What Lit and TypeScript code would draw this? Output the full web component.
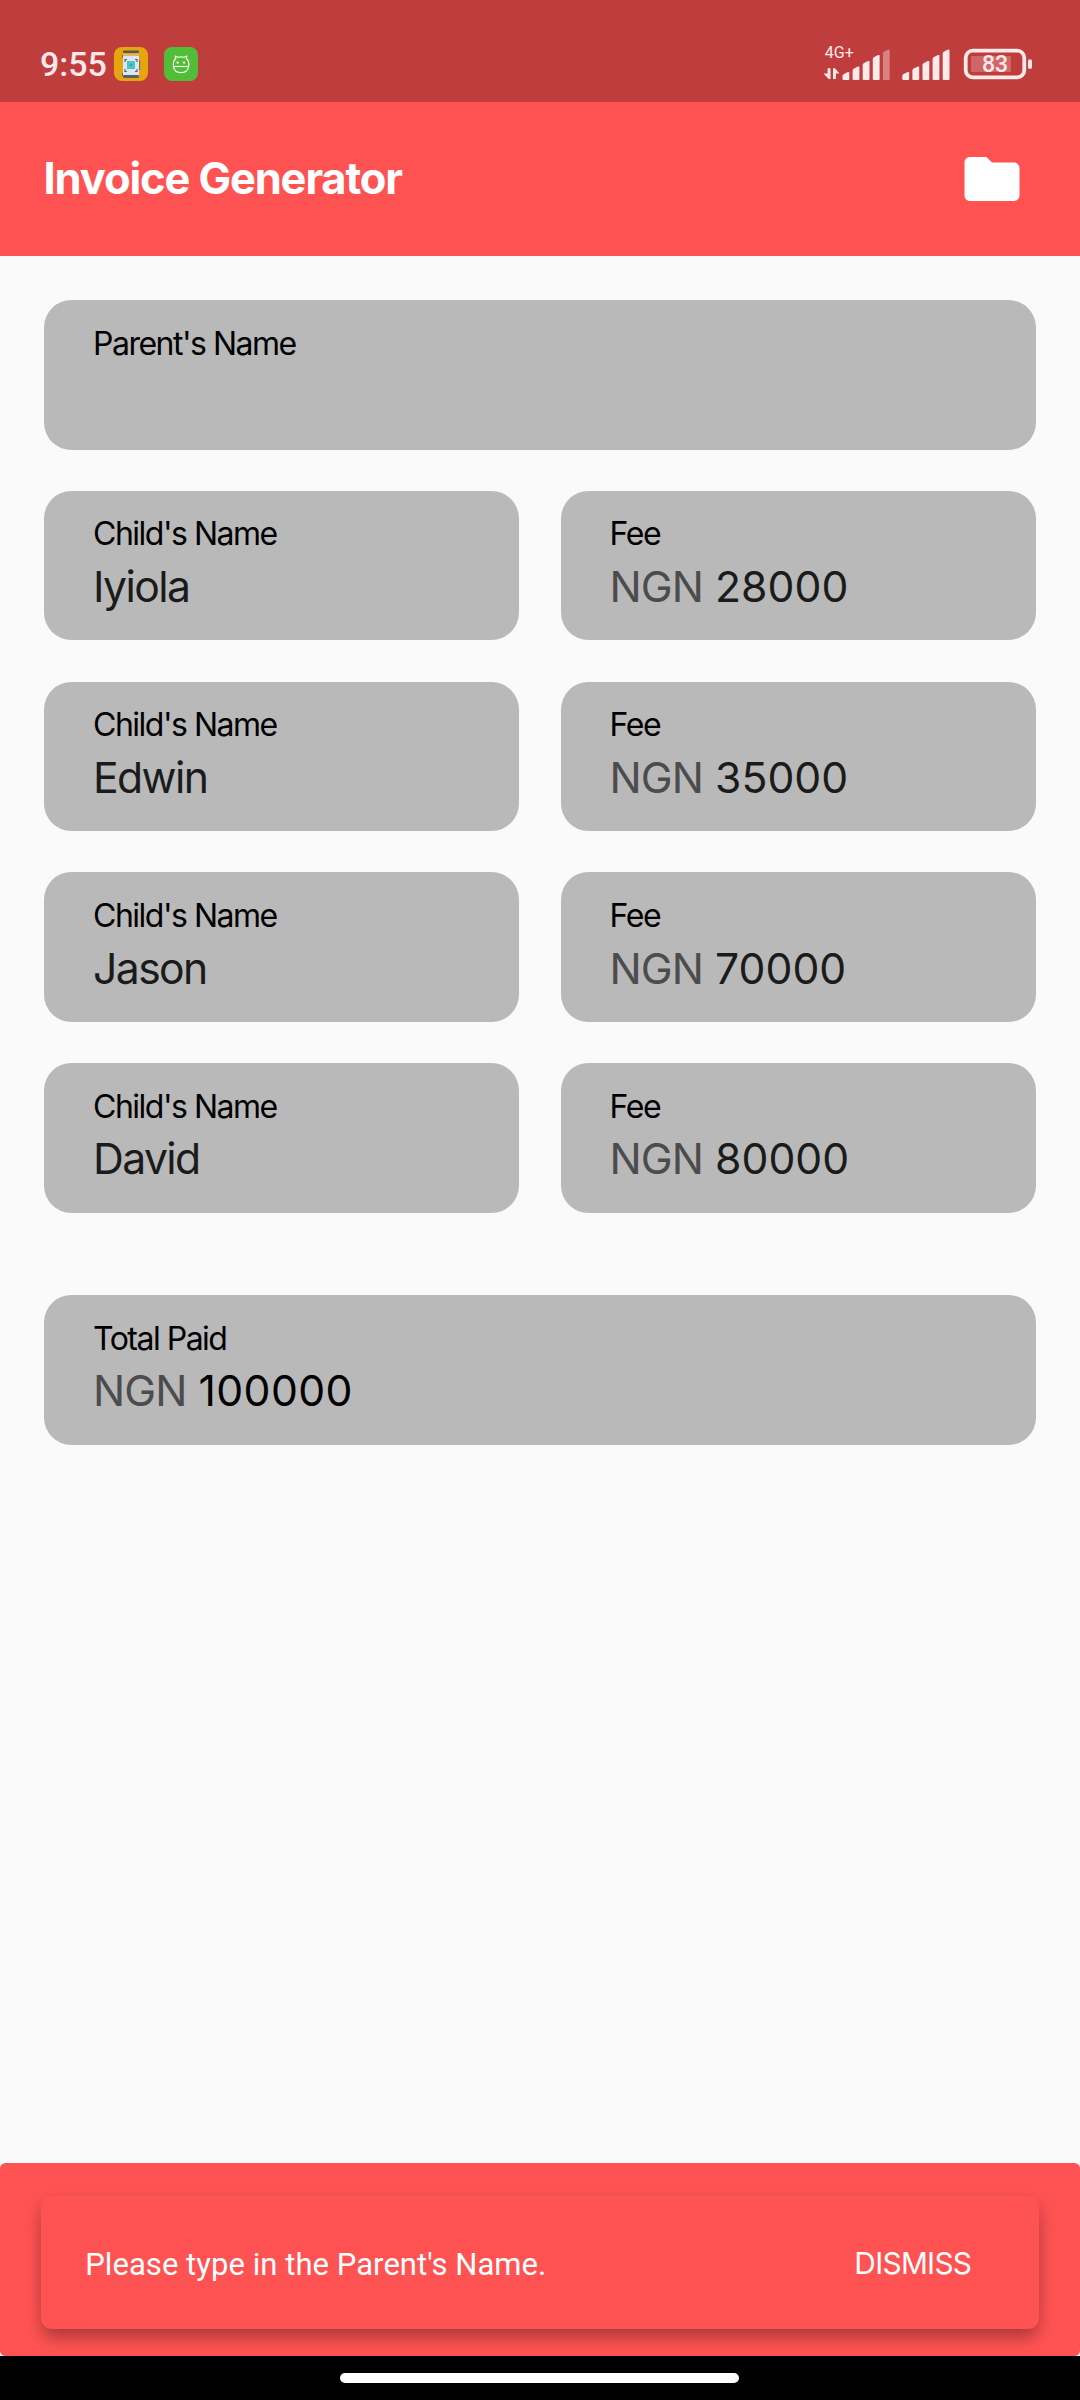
import { LitElement, html, css, svg, nothing } from "lit";
import { customElement, property } from "lit/decorators.js";

interface Child {
  name: string;
  fee: string;
}

const CHILDREN: Child[] = [
  { name: "Iyiola", fee: "28000" },
  { name: "Edwin", fee: "35000" },
  { name: "Jason", fee: "70000" },
  { name: "David", fee: "80000" },
];

/** Signal bars: left edge and height of each, from weakest to strongest. */
const BAR_HEIGHTS = [8, 13.5, 19, 25, 30.5];
const bars = (x: number, lit: number) =>
  BAR_HEIGHTS.map((h, i) => {
    const l = x + i * 10.1;
    const r = l + 6.8;
    return svg`<path class=${i < lit ? "bar" : "bar dim"}
      d="M${l + 1} 40H${r - 1}Q${r} 40 ${r} 39V${40.6 - h}Q${r} ${40 - h} ${r - 1} ${40 - h}L${r - 2} ${40.2 - h}L${l + 1} ${42.2 - h}Q${l} ${43 - h} ${l} ${44 - h}V39Q${l} 40 ${l + 1} 40Z"/>`;
  });

@customElement("status-bar")
export class StatusBar extends LitElement {
  static styles = css`
    :host {
      display: flex;
      align-items: center;
      box-sizing: border-box;
      height: 102px;
      padding: 26px 44px 0 40px;
      background: #c03d3d;
      font-family: Roboto, sans-serif;
      color: #ffe9e9;
    }
    svg { display: block; }
    .time {
      font-size: 34px;
      font-weight: 500;
      line-height: 40px;
      margin-right: 7px;
    }
    .apps { display: flex; gap: 16px; }
    .system { margin-left: auto; fill: #ffe9e9; }
    .net { font-size: 16px; }
    .pct { font-size: 23px; font-weight: 500; }
    .dim { opacity: 0.4; }
    .shell { fill: none; stroke: #ffe9e9; stroke-width: 3.8; }
    .charge { opacity: 0.25; }
  `;
  render() {
    return html`
      <span class="time">9:55</span>
      <div class="apps">
        <svg width="34" height="34" viewBox="0 0 34 34">
          <rect width="34" height="34" rx="8" fill="#e6a50c" />
          <rect x="9" y="4" width="16" height="27" rx="1.5" fill="#dce6f4" />
          <rect x="9" y="3.5" width="16" height="3" rx="1" fill="#5c5a4c" />
          <rect x="9" y="6.5" width="16" height="2.5" fill="#f0b24a" />
          <rect x="9" y="28" width="16" height="3" rx="1" fill="#5c5f66" />
          <path d="M8.5 8v3M8.5 26v3M25.6 13v10" stroke="#6d6a55" stroke-width="1" />
          <path d="M11 15v-2.5h2M21 12.500h2V15M11 22v2.500h2M21 24.500h2V22" fill="none" stroke="#56606c" stroke-width="1.200" />
          <rect x="13" y="14" width="8" height="8" fill="#4cc5c2" />
          <rect x="16.300" y="17.300" width="1.600" height="1.600" fill="#2a8f95" />
        </svg>
        <svg width="34" height="34" viewBox="0 0 34 34">
          <rect width="34" height="34" rx="8" fill="#52bd37" />
          <g fill="none" stroke="#f4fff0" stroke-width="1.200" stroke-linejoin="round">
            <path d="M9.500 19.500C9 16 9.500 13.500 11.800 11.500L11.200 9L14 10.300Q17 9.400 20 10.300L22.800 9L22.400 11.500C24.700 13.500 25.200 16 24.700 19.500C24 23.500 21 25.700 17 25.700S10 23.500 9.500 19.500Z" />
            <path d="M9.500 19.500H24.700" />
          </g>
          <path d="M13.700 14.300v2.600M12.400 15.600h2.600M20 14.300v2.600M18.700 15.600h2.600" stroke="#f4fff0" stroke-width="1" />
        </svg>
      </div>
      <svg class="system" width="216" height="48" viewBox="0 0 216 48">
        <text class="net" x="4.800" y="18.300">4G+</text>
        <path d="M7.600 28.300H10.500V39H8.600L3.600 33.600H7.600Z" />
        <path d="M13 28.300H15L19.400 33.500H15.900V39H13Z" />
        ${bars(22.5, 4)} ${bars(82.3, 5)}
        <rect class="shell" x="145.700" y="10.700" width="58.600" height="26.600" rx="7" />
        <rect class="charge" x="151" y="16" width="40" height="16" rx="1.500" />
        <text class="pct" x="162" y="32">83</text>
        <rect x="208" y="19.300" width="4" height="9.700" rx="2" />
      </svg>
    `;
  }
}

@customElement("app-header")
export class AppHeader extends LitElement {
  static styles = css`
    :host {
      display: flex;
      align-items: center;
      justify-content: space-between;
      box-sizing: border-box;
      height: 154px;
      padding: 0 55px 0 43.5px;
      background: #ff5353;
      color: #fff;
    }
    h1 {
      margin: 0;
      padding-bottom: 2px;
      font: 700 43.5px/52px Inter, sans-serif;
      letter-spacing: -1.15px;
    }
    svg { display: block; fill: #fff; }
  `;
  render() {
    return html`
      <h1>Invoice Generator</h1>
      <svg width="66" height="66" viewBox="0 0 24 24">
        <path d="M10 4H4c-1.100 0-1.990.900-1.990 2L2 18c0 1.100.900 2 2 2h16c1.100 0 2-.900 2-2V8c0-1.100-.900-2-2-2h-8l-2-2z" />
      </svg>
    `;
  }
}

@customElement("form-field")
export class FormField extends LitElement {
  @property() label = "";
  @property() value = "";
  @property() prefixText = "";
  @property({ type: Boolean, reflect: true }) strong = false;

  static styles = css`
    :host {
      display: flex;
      flex: 1 1 0;
      flex-direction: column;
      gap: 6.8px;
      box-sizing: border-box;
      height: 149.6px;
      padding: 23.5px 49px 0;
      border-radius: 27.5px;
      background: #b9b9b9;
      font-family: Inter, sans-serif;
      white-space: nowrap;
    }
    .label {
      font-size: 32px;
      line-height: 40px;
      letter-spacing: -1.5px;
      color: #000;
    }
    .value {
      display: flex;
      gap: 12px;
      font-size: 42.7px;
      line-height: 52px;
      color: #1b1b1b;
    }
    :host([strong]) .value { color: #000; }
    .prefix { color: #4c4c4c; letter-spacing: -0.9px; }
    .name { letter-spacing: -1.6px; }
    .amount { letter-spacing: 0; }
    :host([strong]) .amount { letter-spacing: 0.4px; }
  `;
  render() {
    return html`
      <div class="label">${this.label}</div>
      <div class="value">
        ${this.prefixText ? html`<span class="prefix">${this.prefixText}</span>` : nothing}
        <span class=${this.prefixText ? "amount" : "name"}>${this.value}</span>
      </div>
    `;
  }
}

@customElement("snack-bar")
export class SnackBar extends LitElement {
  static styles = css`
    :host {
      display: block;
      box-sizing: border-box;
      height: 192.6px;
      padding: 32.6px 41.25px 0;
      border-radius: 5.5px;
      background: #ff5353;
      overflow: hidden;
    }
    .card {
      display: flex;
      align-items: center;
      justify-content: space-between;
      box-sizing: border-box;
      height: 132.5px;
      padding: 4px 67.5px 0 44px;
      border-radius: 11px;
      background: #ff5353;
      color: #fff;
      box-shadow:
        0 11px 16px -3px rgba(0, 0, 0, 0.22),
        0 6px 20px rgba(0, 0, 0, 0.16);
    }
    .message {
      padding-top: 2px;
      font: 400 31px/40px Roboto, sans-serif;
      letter-spacing: 0.05px;
    }
    .action {
      padding-bottom: 2px;
      font: 400 29.8px/40px Inter, sans-serif;
      letter-spacing: -0.7px;
    }
  `;
  render() {
    return html`
      <div class="card">
        <span class="message">Please type in the Parent's Name.</span>
        <span class="action">DISMISS</span>
      </div>
    `;
  }
}

@customElement("app-root")
export class AppRoot extends LitElement {
  static styles = css`
    :host {
      display: flex;
      flex-direction: column;
      width: 1080px;
      height: 2400px;
      overflow: hidden;
      background: #fafafa;
    }
    .form {
      display: flex;
      flex: 1;
      flex-direction: column;
      gap: 41.2px;
      padding: 44px 44px 0;
    }
    .row { display: flex; gap: 41.2px; }
    .total { padding-top: 41.2px; }
    .nav {
      display: flex;
      justify-content: center;
      align-items: center;
      box-sizing: border-box;
      height: 44px;
      padding-right: 1px;
      background: #000;
    }
    .pill {
      width: 399px;
      height: 10px;
      border-radius: 5px;
      background: #fff;
    }
  `;
  render() {
    return html`
      <status-bar></status-bar>
      <app-header></app-header>
      <div class="form">
        <div class="row"><form-field label="Parent's Name"></form-field></div>
        ${CHILDREN.map(
          (c) => html`
            <div class="row">
              <form-field label="Child's Name" value=${c.name}></form-field>
              <form-field label="Fee" prefixText="NGN" value=${c.fee}></form-field>
            </div>
          `,
        )}
        <div class="row total">
          <form-field strong label="Total Paid" prefixText="NGN" value="100000"></form-field>
        </div>
      </div>
      <snack-bar></snack-bar>
      <div class="nav"><div class="pill"></div></div>
    `;
  }
}
